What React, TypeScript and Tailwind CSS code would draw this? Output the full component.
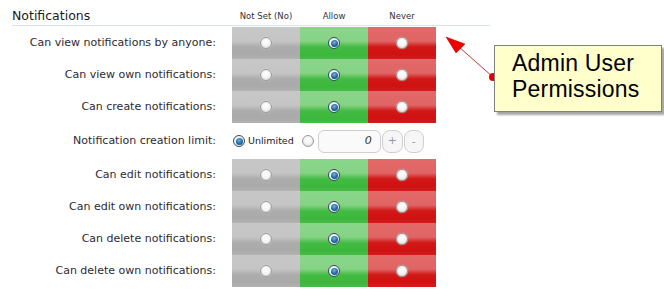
import React from "react";

const rows1 = [
  "Can view notifications by anyone:",
  "Can view own notifications:",
  "Can create notifications:",
];
const rows2 = [
  "Can edit notifications:",
  "Can edit own notifications:",
  "Can delete notifications:",
  "Can delete own notifications:",
];

function Radio({ checked }: { checked?: boolean }) {
  if (checked) {
    return (
      <span className="flex h-[12px] w-[12px] items-center justify-center rounded-full border border-[#3b4a58] bg-[radial-gradient(circle_at_50%_40%,#ffffff_0%,#e8eef2_70%,#b8c4cc_100%)]">
        <span className="h-[7px] w-[7px] rounded-full bg-[radial-gradient(circle_at_45%_35%,#6fb3dd_0%,#1e6a9c_55%,#0c3a5c_100%)]" />
      </span>
    );
  }
  return (
    <span className="block h-[12px] w-[12px] rounded-full border border-[#9c9c9c] bg-[radial-gradient(circle_at_50%_40%,#ffffff_0%,#f4f4f4_45%,#cfcfcf_100%)] shadow-[0_0_1px_rgba(255,255,255,0.8)]" />
  );
}

function PermRow({ label }: { label: string }) {
  return (
    <div className="flex h-[32px] items-center">
      <div className="w-[220px] pr-[16px] text-right text-[11px] text-[#2e2a30]">{label}</div>
      <div className="flex h-full w-[68px] items-center justify-center bg-[linear-gradient(to_bottom,#c7c7c7_0%,#c5c5c5_44%,#acacac_62%,#aaaaaa_85%,#b2b2b2_100%)]">
        <Radio />
      </div>
      <div className="flex h-full w-[68px] items-center justify-center bg-[linear-gradient(to_bottom,#8ad58a_0%,#86d386_44%,#44bb44_62%,#3cb73c_85%,#46bb46_100%)]">
        <Radio checked />
      </div>
      <div className="flex h-full w-[68px] items-center justify-center bg-[linear-gradient(to_bottom,#e26a6a_0%,#e06464_44%,#d11818_62%,#cf1111_85%,#d41c1c_100%)]">
        <Radio />
      </div>
    </div>
  );
}

export default function App() {
  return (
    <div
      className="relative h-[298px] w-[664px] overflow-hidden bg-white"
      style={{ fontFamily: '"DejaVu Sans", Verdana, sans-serif' }}
    >
      <div className="pl-[12px]">
        <div className="flex h-[26px] w-[478px] items-center border-b border-[#d8e6ec] pt-[7px]">
          <div className="w-[220px] text-[12.5px] leading-none text-[#1a1a1a]">Notifications</div>
          <div className="w-[68px] text-center text-[8.5px] leading-none text-[#333]">Not Set (No)</div>
          <div className="w-[68px] text-center text-[8.5px] leading-none text-[#333]">Allow</div>
          <div className="w-[68px] text-center text-[8.5px] leading-none text-[#333]">Never</div>
        </div>
        <div className="pt-[1px]">
          {rows1.map((r) => (
            <PermRow key={r} label={r} />
          ))}
          <div className="flex h-[36px] items-center">
            <div className="w-[220px] pr-[16px] text-right text-[11px] text-[#2e2a30]">
              Notification creation limit:
            </div>
            <div className="ml-[1px] flex items-center">
              <Radio checked />
              <span className="ml-[3px] text-[9.5px] text-[#222]">Unlimited</span>
              <span className="ml-[8px]">
                <Radio />
              </span>
              <div className="ml-[4px] flex h-[23px] w-[63px] items-center justify-end rounded-[6px] border border-[#cfcfcf] bg-[#fafafa] pr-[8px] text-[11px] italic text-[#333]">
                0
              </div>
              <div className="ml-[1px] flex h-[23px] w-[21px] items-center justify-center rounded-[8px] border border-[#cfcfcf] bg-[#f6f6f6] text-[11px] text-[#999]">
                +
              </div>
              <div className="ml-[1px] flex h-[23px] w-[20px] items-center justify-center rounded-[8px] border border-[#cfcfcf] bg-[#f6f6f6] text-[10px] text-[#999]">
                -
              </div>
            </div>
          </div>
          {rows2.map((r) => (
            <PermRow key={r} label={r} />
          ))}
        </div>
      </div>

      <svg className="absolute left-[440px] top-[30px]" width="60" height="55" viewBox="0 0 60 55">
        <line x1="53" y1="47" x2="19" y2="17" stroke="#c03a3a" strokeWidth="1" />
        <polygon points="6,7 25,14 16,23" fill="#ee0000" stroke="#c00000" strokeWidth="0.5" />
        <circle cx="53" cy="47" r="4" fill="#e00000" />
      </svg>

      <div
        className="absolute left-[494px] top-[45px] h-[67px] w-[168px] border border-[#808080] bg-[#ffffcc] pl-[17px] pt-[4px] text-[23px] leading-[26px] tracking-[0.2px] text-black shadow-[3px_3px_2px_rgba(0,0,0,0.35)]"
        style={{ fontFamily: '"Liberation Sans", Arial, sans-serif' }}
      >
        <div>Admin User</div>
        <div>Permissions</div>
      </div>
    </div>
  );
}
